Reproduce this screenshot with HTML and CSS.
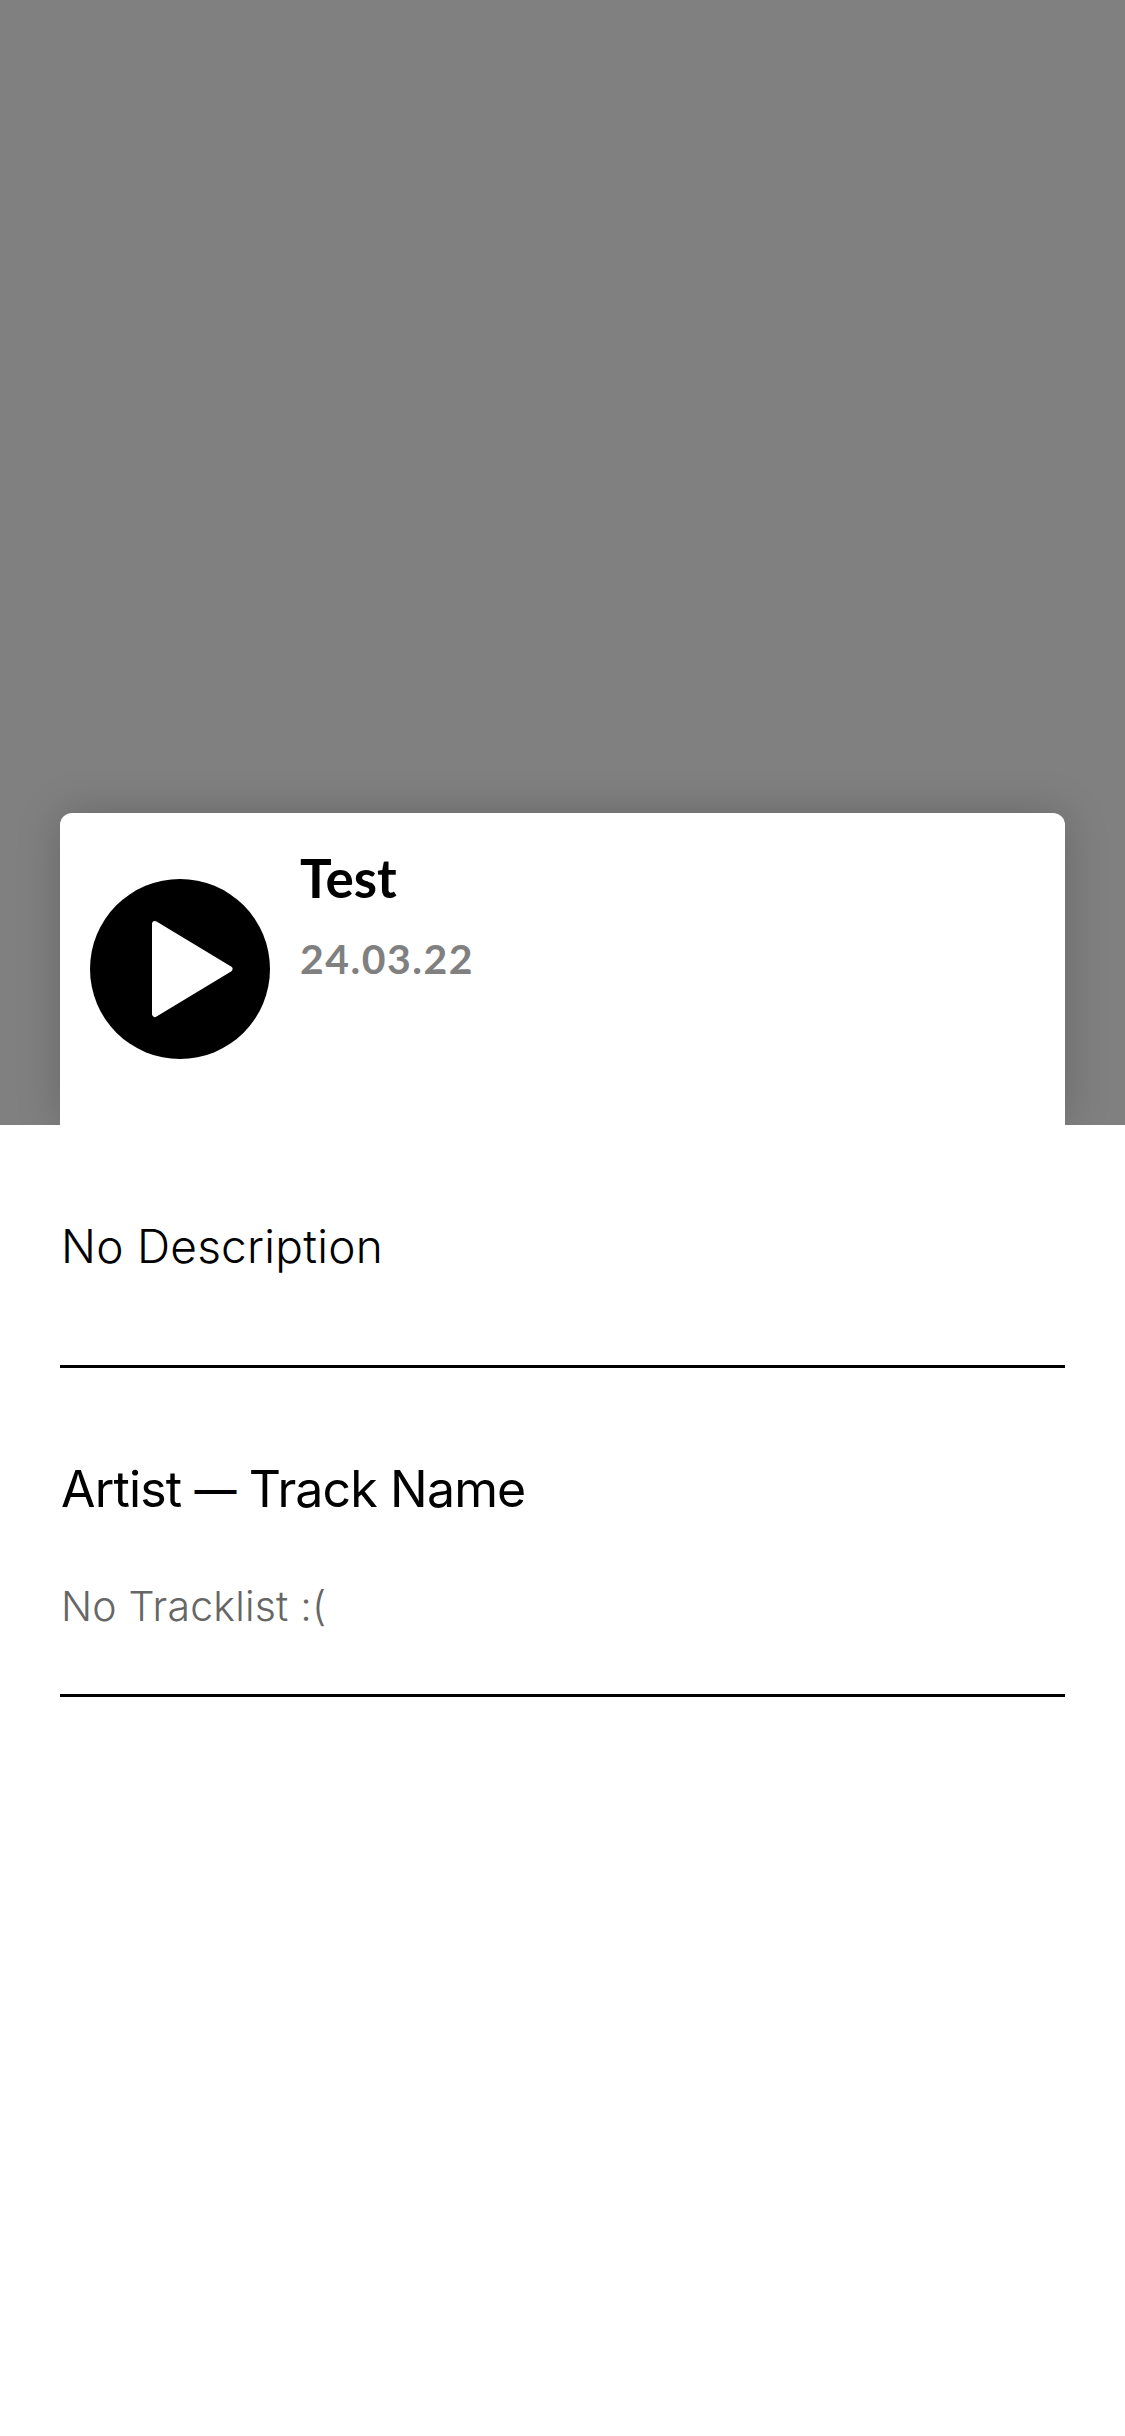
FILE: index.html
```html
<!DOCTYPE html>
<html lang="en">
<head>
<meta charset="utf-8">
<title>Test</title>
<link rel="stylesheet" href="styles.css">
</head>
<body>
<header class="cover">
  <section class="card">
    <svg class="play" viewBox="0 0 180 180" role="img" aria-label="Play">
      <circle cx="90" cy="90" r="90"/>
      <path d="M65 45 L139.500 90 L65 135 Z" fill="#fff" stroke="#fff" stroke-width="6" stroke-linejoin="round"/>
    </svg>
    <div class="meta">
      <h1 class="title">Test</h1>
      <p class="date">24.03.22</p>
    </div>
  </section>
</header>
<main class="content">
  <p class="description">No Description</p>
  <section class="tracks">
    <h2 class="tracks-title">Artist <span class="dash">—</span> Track Name</h2>
    <p class="tracks-empty">No Tracklist :(</p>
  </section>
</main>
</body>
</html>
```
FILE: styles.css
```css
* { box-sizing: border-box; margin: 0; }
body { background: #fff; color: #000; font-family: Inter, sans-serif; min-height: 2436px; }
.cover { height: 1125px; background: #808080; padding: 0 60px; display: flex; align-items: flex-end; overflow: hidden; }
.card { width: 100%; height: 312px; background: #fff; border-radius: 12px 12px 0 0; box-shadow: 0 0 45px rgba(0,0,0,.2); padding: 34px 30px 0; display: flex; gap: 30px; }
.play { width: 180px; height: 180px; margin-top: 32px; }
.title { font: 700 53px/62px Lato, sans-serif; }
.date { font: 700 41px/50px Lato, sans-serif; letter-spacing: 1.5px; color: #808080; margin-top: 25px; }
.content { padding: 0 60px; }
.description { height: 243px; border-bottom: 3px solid #000; padding: 91px 0 0 1px; font: 300 46px/60px Inter, sans-serif; letter-spacing: .25px; }
.tracks { height: 329px; border-bottom: 3px solid #000; padding-top: 90px; }
.tracks-title { font: 400 50px/62px Inter, sans-serif; letter-spacing: -.85px; padding-left: 1px; }
.dash { font-size: 42px; font-weight: 500; line-height: 1; vertical-align: 2px; }
.tracks-empty { font: 300 41px/50px Inter, sans-serif; letter-spacing: .2px; color: #666; margin-top: 61px; padding-left: 1px; }
```
